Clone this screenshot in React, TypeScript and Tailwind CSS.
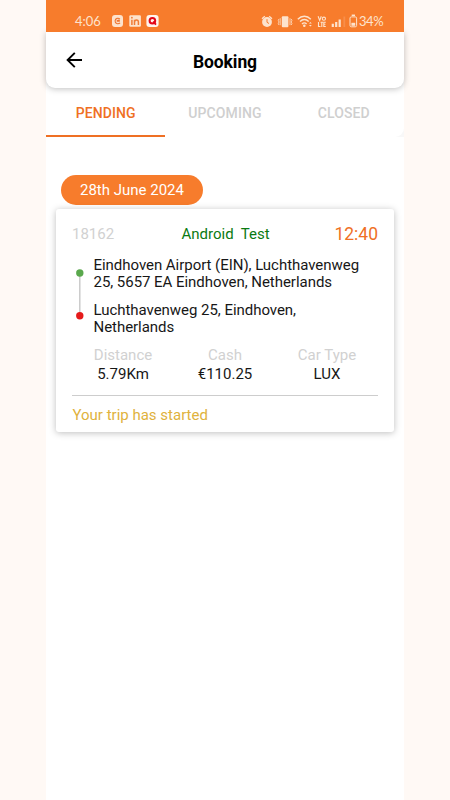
import React from "react";

function NotificationIcons() {
  return (
    <svg className="ml-[11px] h-[12px] w-[47px]" viewBox="0 0 47 12" fill="none">
      <rect x="0" y="0" width="11" height="12" rx="3" fill="#fde3cd" />
      <path d="M7.9 4.1C6.5 2.6 3.3 3.2 3.1 5.7C2.9 8.7 6.2 9.6 8.1 7.9M4.8 6.4C5 5.1 7.2 4.6 7.6 5.9M5 6.2H7.8" stroke="#ee7430" strokeWidth="1.1" />
      <rect x="17.3" y="0.2" width="11.6" height="11.6" rx="1.2" fill="#fde3cd" />
      <path d="M19.9 4.7V10M22.5 10V4.7M22.5 7.2C22.5 4.3 26.4 4.1 26.4 7V10" stroke="#f07c36" strokeWidth="1.5" />
      <circle cx="19.9" cy="2.7" r="0.9" fill="#f07c36" />
      <rect x="34.4" y="0" width="12.2" height="12" rx="3" fill="#fff4ec" />
      <circle cx="40.4" cy="5.8" r="2.8" stroke="#e30618" strokeWidth="2" />
      <path d="M41 6.6L44 9.6" stroke="#e30618" strokeWidth="1.8" />
    </svg>
  );
}

function SystemIcons() {
  return (
    <svg className="h-[14px] w-[97px]" viewBox="261 14 97 14" fill="none">
      <g stroke="#fde3cd">
        <circle cx="267" cy="22" r="4.9" fill="#fde3cd" stroke="none" />
        <path d="M262 18.8L264.8 16.2M272 18.8L269.2 16.2" strokeWidth="1.2" />
        <path d="M267 19.2V22.3L269 23.5" stroke="#f67d2e" />
        <rect x="281.8" y="16.2" width="6.6" height="11" rx="1" fill="#fde3cd" stroke="none" />
        <path d="M280.2 18.2V25.2M290 18.2V25.2M278.9 19L278.3 20.5L279 22L278.3 23.5L278.9 25M291.3 19L291.9 20.5L291.2 22L291.9 23.5L291.3 25" strokeWidth=".8" />
        <path d="M297.8 19.2C301.7 15.3 307 15.3 310.8 19.2M300 21.6C302.8 18.8 306 18.8 308.7 21.6M302 24C303.5 22.5 305.2 22.5 306.6 24" strokeWidth="1.4" />
        <circle cx="304.3" cy="25.7" r="1.3" fill="#fde3cd" stroke="none" />
        <path d="M309 23.6L310.4 22L311.8 23.6ZM309 25L310.4 26.6L311.8 25Z" fill="#fde3cd" stroke="none" />
        <path d="M318.1 16.2L319.7 20.5L321.3 16.2M318.5 22V26.5H320.5M320.5 22.2H323M321.8 22.2V27M325.8 22.2H323.8V26.5H325.8M323.8 24.3H325.4" strokeWidth="1.1" />
        <circle cx="323.9" cy="18.7" r="1.6" strokeWidth="1.1" />
        <path d="M332.8 23.8V27M336.2 22V27M339.7 19.5V27" strokeWidth="2.2" />
        <path d="M344.3 16.5V27" strokeWidth="1.8" opacity=".18" />
        <rect x="350" y="16.9" width="6.6" height="9.9" rx="1.3" strokeWidth="1" />
        <path d="M351.7 15.3H355" strokeWidth="1.5" />
        <path d="M351.4 22.8H355.2V25.8H351.4Z" fill="#fde3cd" stroke="none" />
      </g>
    </svg>
  );
}

function StatusBar() {
  return (
    <div className="relative z-20 flex h-8 items-start bg-[#f77c2c] pl-[29px] text-[#fde3cd]">
      <span className="mt-[13px] w-[26px] whitespace-nowrap font-['Lato'] text-[13px] leading-[16px]">4:06</span>
      <div className="mt-[15px] flex"><NotificationIcons /></div>
      <div className="ml-[102px] mt-[14px] flex"><SystemIcons /></div>
      <span className="ml-[1px] mt-[13px] whitespace-nowrap font-['Lato'] text-[13px] leading-[16px] tracking-[-0.45px]">34%</span>
    </div>
  );
}

function Header() {
  return (
    <header className="relative z-10 grid h-[56px] grid-cols-[40px_1fr_40px] items-center rounded-b-[9px] bg-white shadow-[0_1px_6px_rgba(0,0,0,0.25)]">
      <svg className="ml-[20px] h-[17px] w-[17px]" viewBox="0 0 17 17" fill="none" stroke="black" strokeWidth="1.9">
        <path d="M16 8H2M8.8 0.8L1.6 8L8.8 15.2" />
      </svg>
      <h1 className="pt-[3px] text-center text-[17.5px] font-bold leading-[22px] tracking-[-0.1px] text-black">Booking</h1>
    </header>
  );
}

function Tabs() {
  return (
    <div className="bg-[#f8f8f8]">
      <nav className="grid h-[49px] grid-cols-3 grid-rows-[49px] rounded-br-[9px] bg-white text-center text-[14px] font-medium leading-[50px] tracking-[0.1px] text-[#cfcfcf]">
        <div className="h-[49px] border-b-2 border-[#ef7024] text-[#ef7024]">PENDING</div>
        <div>UPCOMING</div>
        <div className="pr-px">CLOSED</div>
      </nav>
    </div>
  );
}

function Route() {
  return (
    <div className="mt-[13px] flex text-[15px] leading-[17px] tracking-[-0.04px] text-[#171717]">
      <svg className="ml-[3px] mt-[11px] h-[54px] w-[9.5px] shrink-0" viewBox="0 0 9.5 54">
        <path d="M4.8 5V47" stroke="#c7c7c7" strokeWidth="1.4" />
        <circle cx="4.8" cy="5" r="3.7" fill="#5aa84d" />
        <circle cx="4.8" cy="47.7" r="3.7" fill="#e51b1b" />
      </svg>
      <div className="ml-[9px] whitespace-nowrap">
        <p>Eindhoven Airport (EIN), Luchthavenweg<br />25, 5657 EA Eindhoven, Netherlands</p>
        <p className="mt-[11px]">Luchthavenweg 25, Eindhoven,<br />Netherlands</p>
      </div>
    </div>
  );
}

const details = [
  { label: "Distance", value: "5.79Km" },
  { label: "Cash", value: "€110.25" },
  { label: "Car Type", value: "LUX" },
];

function BookingCard() {
  return (
    <article className="ml-[10px] mt-[4px] h-[223px] w-[338px] rounded-[3px] bg-white px-4 pt-[14px] shadow-[0_1px_7px_rgba(0,0,0,0.26)]">
      <div className="flex h-[22px] items-center">
        <span className="w-[109.5px] pt-px text-[15px] text-[#d1d1d1]">18162</span>
        <span className="whitespace-pre pt-px text-[15px] text-[#0a7a12]">Android  Test</span>
        <span className="ml-auto text-[17.5px] leading-[20px] text-[#ef7024]">12:40</span>
      </div>
      <div className="-mt-px"><Route /></div>
      <div className="mt-[10px] grid grid-cols-3 text-center text-[15px] leading-[19px]">
        {details.map((detail) => (
          <div key={detail.label}>
            <div className="text-[#d1d1d1]">{detail.label}</div>
            <div className="text-[#171717]">{detail.value}</div>
          </div>
        ))}
      </div>
      <div className="mt-[11px] h-px bg-[#cdcdcd]" />
      <p className="mt-[9px] pl-[0.5px] text-[15px] leading-[20px] text-[#e0b23c]">Your trip has started</p>
    </article>
  );
}

export default function App() {
  return (
    <div className="h-[800px] w-[450px] overflow-hidden bg-[#fff9f5] pl-[46px] font-['Roboto',sans-serif]">
      <main className="h-full w-[358px] bg-white">
        <StatusBar />
        <Header />
        <Tabs />
        <div className="ml-[15px] mt-[38px] h-[30px] w-[142px] rounded-full bg-[#f77c2c] text-center text-[15px] leading-[31px] text-white">28th June 2024</div>
        <BookingCard />
      </main>
    </div>
  );
}
